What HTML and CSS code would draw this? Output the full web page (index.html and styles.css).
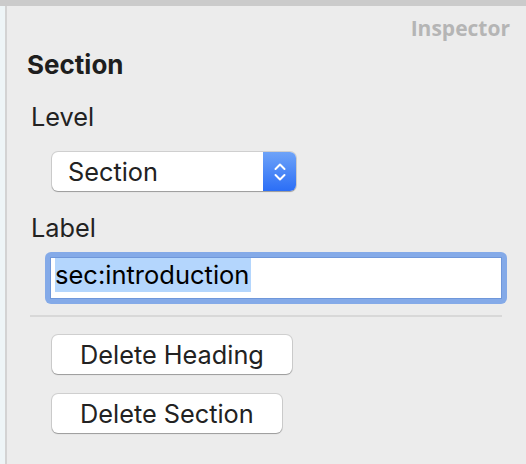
FILE: index.html
```html
<!DOCTYPE html>
<html lang="en">
<head>
  <meta charset="UTF-8">
  <title>Inspector</title>
  <link rel="stylesheet" href="styles.css">
</head>
<body>
  <div class="topbar"></div>
  <div class="window">
    <div class="sidebar"></div>
    <div class="inspector">
      <div class="title">Inspector</div>
      <h2>Section</h2>

      <div class="field-label">Level</div>
      <div class="popup">
        <span class="popup-value">Section</span>
        <span class="stepper">
          <svg width="16" height="24" viewBox="0 0 16 24">
            <path d="M3.5 9 L8 4.5 L12.5 9" fill="none" stroke="#fff" stroke-width="2" stroke-linecap="round" stroke-linejoin="round"/>
            <path d="M3.5 15 L8 19.5 L12.5 15" fill="none" stroke="#fff" stroke-width="2" stroke-linecap="round" stroke-linejoin="round"/>
          </svg>
        </span>
      </div>

      <div class="field-label">Label</div>
      <div class="textfield">
        <div class="textfield-inner"><span class="selected">sec:introduction</span></div>
      </div>

      <hr class="separator">

      <div class="buttons">
        <button class="btn">Delete Heading</button>
        <button class="btn">Delete Section</button>
      </div>
    </div>
  </div>
</body>
</html>
```

FILE: styles.css
```css
html, body {
  margin: 0;
  height: 100%;
}
body {
  font-family: Inter, "Noto Sans", sans-serif;
  background-color: #ececec;
  color: #222;
  display: flex;
  flex-direction: column;
}
.topbar {
  height: 6px;
  background-color: #cbcbcb;
}
.window {
  flex: 1;
  display: flex;
}
.sidebar {
  width: 5px;
  background-color: #eef5f7;
  border-right: 2px solid #d3d3d3;
}
.inspector {
  flex: 1;
  padding: 0 16px 0 20px;
}
.title {
  text-align: right;
  font-family: "Open Sans", sans-serif;
  font-weight: 700;
  font-size: 21px;
  color: #b5b5b5;
  margin-top: 7px;
  line-height: 30px;
}
h2 {
  margin: 7px 0 0;
  font-size: 26px;
  font-weight: 700;
  line-height: 30px;
  color: #1e1e1e;
}
.field-label {
  font-size: 25.3px;
  line-height: 30px;
  margin: 22px 0 0 4px;
}
.popup {
  display: flex;
  width: 244px;
  height: 39px;
  margin: 20px 0 0 25px;
  background-color: #fff;
  border-radius: 6px;
  box-shadow: 0 0 0 1px rgba(0,0,0,0.12), 0 1px 1px rgba(0,0,0,0.25);
  overflow: hidden;
}
.popup-value {
  flex: 1;
  font-size: 25.3px;
  line-height: 39px;
  padding-left: 16px;
}
.stepper {
  width: 33px;
  display: flex;
  align-items: center;
  justify-content: center;
  background: linear-gradient(#6ea3f8, #2b6ef6);
}
.stepper svg {
  display: block;
}
.textfield {
  margin: 9px 0 0 18px;
  width: 462px;
  height: 52px;
  box-sizing: border-box;
  padding: 5px;
  background-color: #84aae8;
  border-radius: 6px;
}
.textfield-inner {
  height: 100%;
  box-sizing: border-box;
  background-color: #fff;
  border: 1px solid #6f97da;
  padding: 0 0 0 4px;
  font-size: 25.5px;
  line-height: 34px;
  color: #000;
}
.selected {
  background-color: #b4d6fd;
  display: inline-block;
  padding-right: 2px;
}
.separator {
  border: none;
  height: 2px;
  background-color: #d8d8d8;
  margin: 11px 0 0 3px;
  width: 472px;
}
.buttons {
  display: flex;
  flex-direction: column;
  align-items: flex-start;
  gap: 20px;
  margin: 18px 0 0 25px;
}
.btn {
  font-family: Inter, "Noto Sans", sans-serif;
  font-size: 25.3px;
  color: #222;
  height: 39px;
  padding: 0 28px;
  background-color: #fff;
  border: none;
  border-radius: 6px;
  box-shadow: 0 0 0 1px rgba(0,0,0,0.12), 0 1px 1px rgba(0,0,0,0.25);
}
```
